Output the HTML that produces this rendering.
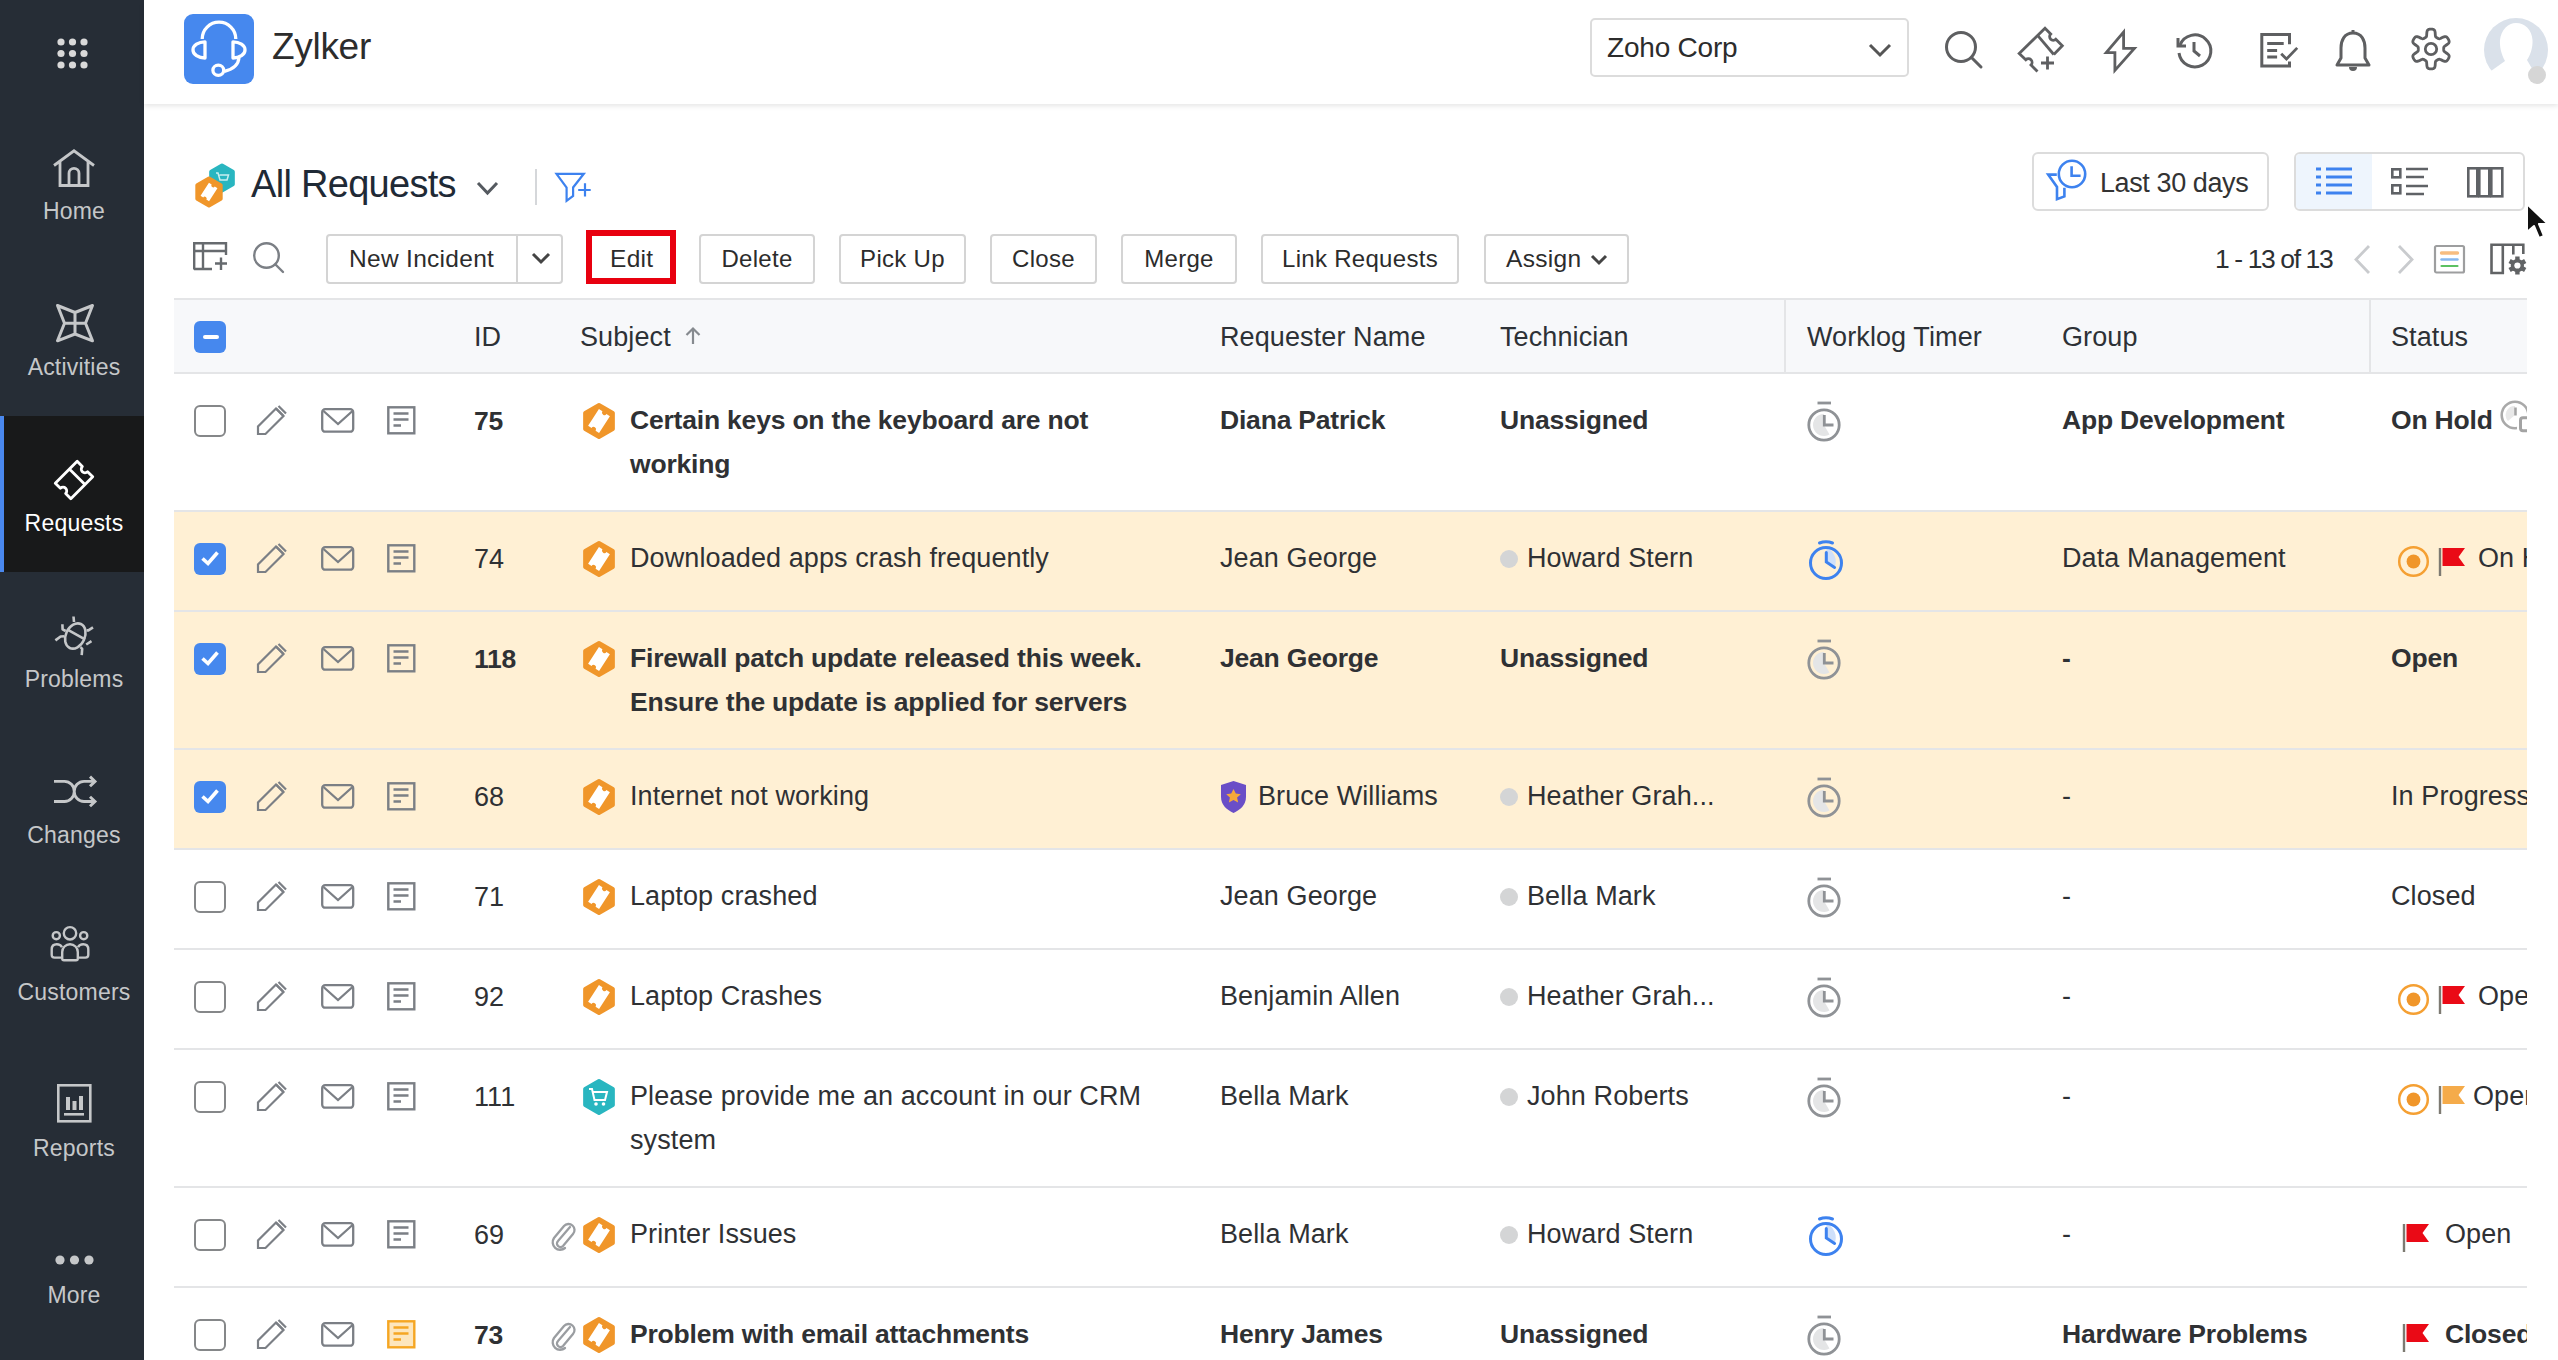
<!DOCTYPE html>
<html><head><meta charset="utf-8"><style>
html,body{margin:0;padding:0;}
body{width:2558px;height:1360px;position:relative;overflow:hidden;background:#fff;font-family:"Liberation Sans",sans-serif;}
svg{overflow:visible}
</style></head><body>
<div id="sb" style="position:absolute;left:0;top:0;width:144px;height:1360px;background:#262d36"></div>
<svg style="position:absolute;left:57px;top:38px" width="31" height="31" viewBox="0 0 31 31"><circle cx="4.0" cy="4.0" r="3.6" fill="#d9d9d9"/><circle cx="4.0" cy="15.5" r="3.6" fill="#d9d9d9"/><circle cx="4.0" cy="27.0" r="3.6" fill="#d9d9d9"/><circle cx="15.5" cy="4.0" r="3.6" fill="#d9d9d9"/><circle cx="15.5" cy="15.5" r="3.6" fill="#d9d9d9"/><circle cx="15.5" cy="27.0" r="3.6" fill="#d9d9d9"/><circle cx="27.0" cy="4.0" r="3.6" fill="#d9d9d9"/><circle cx="27.0" cy="15.5" r="3.6" fill="#d9d9d9"/><circle cx="27.0" cy="27.0" r="3.6" fill="#d9d9d9"/></svg>
<div style="position:absolute;left:0;top:416px;width:144px;height:156px;background:#18191a"></div>
<div style="position:absolute;left:0;top:416px;width:4px;height:156px;background:#4a88ee"></div>
<svg style="position:absolute;left:52px;top:149px" width="44" height="40" viewBox="0 0 44 40"><path d="M2 16.5 L22 1.8 L42 16.5 M8 12.5 V36.5 H36 V12.5 M17 36.5 V24.3 A5 5 0 0 1 27 24.3 V36.5" fill="none" stroke="#c5c7c9" stroke-width="2.8" stroke-linejoin="miter"/></svg>
<div style="position:absolute;left:2px;width:144px;top:200px;text-align:center;font-size:23px;letter-spacing:0.2px;color:#c5c7c9;line-height:1">Home</div>
<svg style="position:absolute;left:53px;top:302px" width="44" height="42" viewBox="0 0 44 42"><path d="M4.5 3.5 L22 10.5 L39.5 3.5 L32.5 21.2 L39.5 38.8 L22 32 L4.5 38.8 L11.5 21.2 Z M22 10.5 V32 M11.5 21.2 H32.5" fill="none" stroke="#c5c7c9" stroke-width="3" stroke-linejoin="round"/></svg>
<div style="position:absolute;left:2px;width:144px;top:356px;text-align:center;font-size:23px;letter-spacing:0.2px;color:#c5c7c9;line-height:1">Activities</div>
<svg style="position:absolute;left:52px;top:458px" width="44" height="44" viewBox="0 0 44 44"><g transform="rotate(-45 22 22)"><path d="M6.5 11 H37.5 V18.3 a3.7 3.7 0 0 0 0 7.4 V33 H6.5 V25.7 a3.7 3.7 0 0 0 0 -7.4 Z M26.5 11 V33" fill="none" stroke="#fff" stroke-width="2.8" stroke-linejoin="round"/></g></svg>
<div style="position:absolute;left:2px;width:144px;top:512px;text-align:center;font-size:23px;letter-spacing:0.2px;color:#ffffff;line-height:1">Requests</div>
<svg style="position:absolute;left:53px;top:614px" width="42" height="43" viewBox="0 0 42 43"><g fill="none" stroke="#c5c7c9" stroke-width="2.6" stroke-linecap="butt" stroke-linejoin="round"><ellipse cx="22.3" cy="22" rx="9.5" ry="13.2" transform="rotate(25 22.3 22)"/><path d="M14.5 15.6 L32 25.3 M20.5 2.5 L21 8 M9.4 10.2 L9.6 15.3 L12.7 17 M2.4 26.4 L7.6 22.5 L11.3 22.3 M40 13.3 L35.4 16.4 L33.6 16.4 M38.5 27.2 L33.2 30.5 M28.7 41.1 L29.2 34.9 L27.5 33.2"/></g></svg>
<div style="position:absolute;left:2px;width:144px;top:668px;text-align:center;font-size:23px;letter-spacing:0.2px;color:#c5c7c9;line-height:1">Problems</div>
<svg style="position:absolute;left:53px;top:775px" width="46" height="34" viewBox="0 0 46 34"><g fill="none" stroke="#c5c7c9" stroke-width="2.9"><path d="M1 6.4 H11.5 A9.8 10.05 0 0 1 11.5 26.5 H1 M41 6.4 H31 A9.8 10.05 0 0 0 31 26.5 H41"/><path d="M37 1.6 L42 6.4 L37 11.2 M37 21.7 L42 26.5 L37 31.3" stroke-linejoin="miter"/></g></svg>
<div style="position:absolute;left:2px;width:144px;top:824px;text-align:center;font-size:23px;letter-spacing:0.2px;color:#c5c7c9;line-height:1">Changes</div>
<svg style="position:absolute;left:50px;top:926px" width="41" height="38" viewBox="0 0 41 38"><g fill="none" stroke="#c5c7c9" stroke-width="2.4" stroke-linejoin="round"><circle cx="20" cy="7.3" r="6.2"/><circle cx="6.3" cy="9.7" r="3.6"/><circle cx="33.7" cy="9.7" r="3.6"/><path d="M12.2 26 A7.8 7.8 0 0 1 27.8 26 V32.5 Q27.8 34.3 26 34.3 H14 Q12.2 34.3 12.2 32.5 Z"/><path d="M11.2 31.6 H4.6 Q1.7 31.6 1.7 28.7 V23.5 Q1.7 18.3 6.8 18.3 Q10.5 18.3 12 21.2"/><path d="M28.8 31.6 H35.4 Q38.3 31.6 38.3 28.7 V23.5 Q38.3 18.3 33.2 18.3 Q29.5 18.3 28 21.2"/></g></svg>
<div style="position:absolute;left:2px;width:144px;top:981px;text-align:center;font-size:23px;letter-spacing:0.2px;color:#c5c7c9;line-height:1">Customers</div>
<svg style="position:absolute;left:57px;top:1084px" width="35" height="39" viewBox="0 0 35 39"><rect x="1.3" y="1.3" width="32" height="36" fill="none" stroke="#c5c7c9" stroke-width="2.6"/><rect x="9" y="13" width="4" height="13" fill="#c5c7c9"/><rect x="15.5" y="17" width="4" height="9" fill="#c5c7c9"/><rect x="22" y="12" width="4" height="14" fill="#c5c7c9"/><rect x="7" y="29" width="20" height="2.6" fill="#c5c7c9"/></svg>
<div style="position:absolute;left:2px;width:144px;top:1137px;text-align:center;font-size:23px;letter-spacing:0.2px;color:#c5c7c9;line-height:1">Reports</div>
<svg style="position:absolute;left:55px;top:1255px" width="40" height="10" viewBox="0 0 40 10"><circle cx="5" cy="5" r="4.6" fill="#c5c7c9"/><circle cx="19.5" cy="5" r="4.6" fill="#c5c7c9"/><circle cx="34" cy="5" r="4.6" fill="#c5c7c9"/></svg>
<div style="position:absolute;left:2px;width:144px;top:1284px;text-align:center;font-size:23px;letter-spacing:0.2px;color:#c5c7c9;line-height:1">More</div>
<div style="position:absolute;left:144px;top:0;width:2414px;height:104px;background:#fff;box-shadow:0 2px 5px rgba(0,0,0,0.10);z-index:2"></div>
<div style="position:absolute;left:184px;top:14px;width:70px;height:70px;border-radius:9px;background:#4688ee;z-index:3"></div>
<svg style="position:absolute;left:184px;top:14px;z-index:3" width="70" height="70" viewBox="0 0 70 70"><g fill="none" stroke="#fff" stroke-width="3.3" stroke-linejoin="round"><path d="M18.2 25 A16.8 16.8 0 0 1 51.8 25"/><path d="M21 27.8 V44 A12 8.1 0 0 1 21 27.8 Z"/><path d="M49 27.8 V44 A12 8.1 0 0 0 49 27.8 Z"/><path d="M55 43.5 C54.5 51 48 55.5 40.5 57.3"/><ellipse cx="34.3" cy="56.2" rx="5.4" ry="5.1"/></g></svg>
<div style="position:absolute;left:272px;top:28px;font-size:37px;font-weight:normal;color:#2c2c2c;letter-spacing:-0.3px;white-space:nowrap;line-height:1;z-index:3">Zylker</div>
<div style="position:absolute;left:1590px;top:18px;width:315px;height:55px;border:2px solid #dcdcdc;border-radius:5px;background:#fff;z-index:3"></div>
<div style="position:absolute;left:1607px;top:34px;font-size:28px;font-weight:normal;color:#2c2c2c;letter-spacing:-0.2px;white-space:nowrap;line-height:1;z-index:3">Zoho Corp</div>
<svg style="position:absolute;left:1868px;top:42px;z-index:3" width="24" height="16" viewBox="0 0 24 16"><path d="M2 3 L12 13 L22 3" fill="none" stroke="#555" stroke-width="3"/></svg>
<svg style="position:absolute;left:1944px;top:30px;z-index:3" width="40" height="40" viewBox="0 0 40 40"><g fill="none" stroke="#5e5f61" stroke-width="3"><circle cx="17" cy="17" r="14.5"/><path d="M27.5 27.5 L37 37" stroke-linecap="round"/></g></svg>
<svg style="position:absolute;left:2010px;top:20px;z-index:3" width="60" height="60" viewBox="0 0 60 60"><g fill="none" stroke="#5e5f61" stroke-width="2.8" stroke-linejoin="miter"><path d="M27.5 51.5 L21 45 A3.6 3.6 0 0 0 15.8 39.8 L9.2 33.5 L35 8.2 L40.7 14 A3.6 3.6 0 0 0 45.8 19.2 L52.3 25.8 L43.8 34.5"/><path d="M28 15.8 L43.8 34.5"/><path d="M31 43 H44 M37.5 36.5 V49.5"/></g></svg>
<svg style="position:absolute;left:2102px;top:28px;z-index:3" width="36" height="46" viewBox="0 0 36 46"><path d="M21.6 4 V20.4 H32.4 L12.9 42.4 V24.7 H4.2 Z" fill="none" stroke="#5e5f61" stroke-width="2.8" stroke-linejoin="miter" stroke-miterlimit="10"/></svg>
<svg style="position:absolute;left:2175px;top:31px;z-index:3" width="40" height="40" viewBox="0 0 40 40"><g fill="none" stroke="#5e5f61" stroke-width="3"><path d="M5 14 A16 16 0 1 1 4 22"/><path d="M3 7 V15 H11" stroke-linejoin="miter"/><path d="M19 11 V20 L25 25"/></g></svg>
<svg style="position:absolute;left:2258px;top:31px;z-index:3" width="42" height="40" viewBox="0 0 42 40"><g fill="none" stroke="#5e5f61" stroke-width="3"><path d="M31.5 13.2 V3.6 H3.8 V35.1 H31.5 V30.5"/><path d="M9.2 12.4 H25.7 M9.2 19.4 H19.1 M9.2 26 H19.1"/><path d="M23.2 22.7 L28.5 28 L39.2 16.9" stroke-width="2.8"/></g></svg>
<svg style="position:absolute;left:2335px;top:28px;z-index:3" width="36" height="46" viewBox="0 0 36 46"><g fill="none" stroke="#5e5f61" stroke-width="3"><path d="M18 5 C9 5 6 13 6 20 V30 L2 37 H34 L30 30 V20 C30 13 27 5 18 5 Z" stroke-linejoin="round"/><path d="M18 2 V5"/></g><path d="M14 39 H22 a4 4 0 0 1 -8 0Z" fill="#5e5f61"/></svg>
<svg style="position:absolute;left:2409px;top:27px;z-index:3" width="44" height="44" viewBox="0 0 44 44"><g fill="none" stroke="#5e5f61" stroke-width="2.8" stroke-linejoin="round"><path d="M34.70,22.00 L34.70,22.44 L34.71,22.89 L34.74,23.34 L34.85,23.81 L35.14,24.32 L35.81,24.94 L37.01,25.74 L38.47,26.72 L39.58,27.71 L40.09,28.59 L40.19,29.35 L40.07,30.05 L39.85,30.71 L39.56,31.34 L39.23,31.95 L38.87,32.54 L38.46,33.11 L38.01,33.63 L37.46,34.08 L36.75,34.38 L35.73,34.37 L34.33,33.90 L32.74,33.13 L31.45,32.49 L30.58,32.22 L29.99,32.23 L29.53,32.37 L29.12,32.56 L28.73,32.78 L28.35,33.00 L27.97,33.22 L27.59,33.45 L27.21,33.71 L26.86,34.03 L26.56,34.54 L26.36,35.43 L26.26,36.87 L26.15,38.62 L25.84,40.08 L25.34,40.96 L24.73,41.43 L24.07,41.68 L23.39,41.81 L22.69,41.88 L22.00,41.90 L21.31,41.88 L20.61,41.81 L19.93,41.68 L19.27,41.43 L18.66,40.96 L18.16,40.08 L17.85,38.62 L17.74,36.87 L17.64,35.43 L17.44,34.54 L17.14,34.03 L16.79,33.71 L16.41,33.45 L16.03,33.22 L15.65,33.00 L15.27,32.78 L14.88,32.56 L14.47,32.37 L14.01,32.23 L13.42,32.22 L12.55,32.49 L11.26,33.13 L9.67,33.90 L8.27,34.37 L7.25,34.38 L6.54,34.08 L5.99,33.63 L5.54,33.11 L5.13,32.54 L4.77,31.95 L4.44,31.34 L4.15,30.71 L3.93,30.05 L3.81,29.35 L3.91,28.59 L4.42,27.71 L5.53,26.72 L6.99,25.74 L8.19,24.94 L8.86,24.32 L9.15,23.81 L9.26,23.34 L9.29,22.89 L9.30,22.44 L9.30,22.00 L9.30,21.56 L9.29,21.11 L9.26,20.66 L9.15,20.19 L8.86,19.68 L8.19,19.06 L6.99,18.26 L5.53,17.28 L4.42,16.29 L3.91,15.41 L3.81,14.65 L3.93,13.95 L4.15,13.29 L4.44,12.66 L4.77,12.05 L5.13,11.46 L5.54,10.89 L5.99,10.37 L6.54,9.92 L7.25,9.62 L8.27,9.63 L9.67,10.10 L11.26,10.87 L12.55,11.51 L13.42,11.78 L14.01,11.77 L14.47,11.63 L14.88,11.44 L15.27,11.22 L15.65,11.00 L16.03,10.78 L16.41,10.55 L16.79,10.29 L17.14,9.97 L17.44,9.46 L17.64,8.57 L17.74,7.13 L17.85,5.38 L18.16,3.92 L18.66,3.04 L19.27,2.57 L19.93,2.32 L20.61,2.19 L21.31,2.12 L22.00,2.10 L22.69,2.12 L23.39,2.19 L24.07,2.32 L24.73,2.57 L25.34,3.04 L25.84,3.92 L26.15,5.38 L26.26,7.13 L26.36,8.57 L26.56,9.46 L26.86,9.97 L27.21,10.29 L27.59,10.55 L27.97,10.78 L28.35,11.00 L28.73,11.22 L29.12,11.44 L29.53,11.63 L29.99,11.77 L30.58,11.78 L31.45,11.51 L32.74,10.87 L34.33,10.10 L35.73,9.63 L36.75,9.62 L37.46,9.92 L38.01,10.37 L38.46,10.89 L38.87,11.46 L39.23,12.05 L39.56,12.66 L39.85,13.29 L40.07,13.95 L40.19,14.65 L40.09,15.41 L39.58,16.29 L38.47,17.28 L37.01,18.26 L35.81,19.06 L35.14,19.68 L34.85,20.19 L34.74,20.66 L34.71,21.11 L34.70,21.56 Z"/><circle cx="22" cy="22" r="5.7"/></g></svg>
<svg style="position:absolute;left:2482px;top:16px;z-index:3" width="76" height="72" viewBox="0 0 76 72"><circle cx="34" cy="34" r="32" fill="#dae1ea"/><path d="M5 72 L9 55 L23 45 C19 38 17.5 30 18 24 C19 14 26 7 34 7 C43 7 50 14 50.5 24 C51 32 48 40 45 44 L52 56 L58 72 Z" fill="#fff"/><circle cx="55" cy="59" r="9" fill="#d6d6d6"/></svg>
<svg style="position:absolute;left:193px;top:163px" width="46" height="46" viewBox="0 0 46 46"><polygon points="29.00,2.50 39.83,8.75 39.83,21.25 29.00,27.50 18.17,21.25 18.17,8.75" fill="#29b6c0" stroke="#29b6c0" stroke-width="4" stroke-linejoin="round"/><path d="M23 10 h2 l2 7 h7 l1.5 -5 h-9" fill="none" stroke="#c7eef0" stroke-width="1.5"/><polygon points="16.00,15.50 27.69,22.25 27.69,35.75 16.00,42.50 4.31,35.75 4.31,22.25" fill="#f0962a" stroke="#f0962a" stroke-width="4" stroke-linejoin="round"/><g transform="translate(16 29) rotate(-57) scale(1.1)"><path d="M-7 -4.6 H7 V-1.7 a1.7 1.7 0 0 0 0 3.4 V4.6 H-7 V1.7 a1.7 1.7 0 0 0 0 -3.4 Z" fill="#fff"/></g></svg>
<div style="position:absolute;left:251px;top:165px;font-size:38px;font-weight:normal;color:#1f2a36;letter-spacing:-0.7px;white-space:nowrap;line-height:1;">All Requests</div>
<svg style="position:absolute;left:476px;top:180px" width="23" height="16" viewBox="0 0 23 16"><path d="M2 3 L11.5 13 L21 3" fill="none" stroke="#555a60" stroke-width="3"/></svg>
<div style="position:absolute;left:535px;top:169px;width:2px;height:36px;background:#d5d7da"></div>
<svg style="position:absolute;left:554px;top:171px" width="40" height="33" viewBox="0 0 40 33"><g fill="none" stroke="#3d82ef" stroke-width="2.2" stroke-linejoin="miter"><path d="M2.5 2.8 H29.8 L19.1 16.5 V25 L12.6 29.8 V16.5 Z"/><path d="M24.2 19 H36.7 M31 12.3 V25.6"/></g></svg>
<div style="position:absolute;left:2032px;top:152px;width:233px;height:55px;border:2px solid #dcdcdc;border-radius:6px;background:#fff"></div>
<svg style="position:absolute;left:2046px;top:157px" width="44" height="45" viewBox="0 0 44 45"><g fill="none" stroke="#3d82ef" stroke-width="2.6"><circle cx="26" cy="17" r="13.2"/><path d="M25.6 9.2 V18.8 H34.6"/><path d="M10.8 17.6 H2.2 L11 30 V42.2 L18.4 39.4 V30.7" stroke-linejoin="miter"/></g></svg>
<div style="position:absolute;left:2100px;top:169.5px;font-size:27px;font-weight:normal;color:#333;letter-spacing:-0.4px;white-space:nowrap;line-height:1;">Last 30 days</div>
<div style="position:absolute;left:2294px;top:152px;width:227px;height:55px;border:2px solid #dcdcdc;border-radius:6px;background:#fff;overflow:hidden"><div style="position:absolute;left:0;top:0;width:76px;height:55px;background:#eef5fd"></div></div>
<svg style="position:absolute;left:2315px;top:167px" width="38" height="32" viewBox="0 0 38 32"><g stroke="#3d82ef" stroke-width="3"><path d="M1 2 H6 M1 10 H6 M1 18 H6 M1 26 H6 M11 2 H37 M11 10 H37 M11 18 H37 M11 26 H37"/></g></svg>
<svg style="position:absolute;left:2391px;top:167px" width="38" height="32" viewBox="0 0 38 32"><g fill="none" stroke="#5f6266" stroke-width="2.6"><rect x="1.3" y="2.3" width="8" height="8"/><rect x="1.3" y="18.3" width="8" height="8"/><path d="M15 2 H37 M15 10 H33 M15 19 H37 M15 27 H33"/></g></svg>
<svg style="position:absolute;left:2467px;top:167px" width="38" height="32" viewBox="0 0 38 32"><g fill="none" stroke="#5f6266" stroke-width="2.6"><rect x="1.3" y="1.3" width="9" height="28"/><rect x="12.3" y="1.3" width="10" height="28"/><rect x="24.3" y="1.3" width="11" height="28"/></g></svg>
<svg style="position:absolute;left:193px;top:242px" width="36" height="29" viewBox="0 0 36 29"><g fill="none" stroke="#666a6e" stroke-width="2.4"><path d="M1.2 27.5 V1.2 H33 V13"/><path d="M1 9 H33 M10 1 V27.5 M1 27 H19"/><path d="M22 21.5 H34 M28 15.5 V28"/></g></svg>
<svg style="position:absolute;left:252px;top:241px" width="34" height="33" viewBox="0 0 34 33"><g fill="none" stroke="#7b7f85" stroke-width="2.4"><circle cx="14.5" cy="14.5" r="12.3"/><path d="M23.5 23.5 L31 31" stroke-linecap="round"/></g></svg>
<div style="position:absolute;left:326px;top:234px;width:233px;height:46px;border:2px solid #d4d4d4;border-radius:4px;background:#fff"></div>
<div style="position:absolute;left:516px;top:236px;width:2px;height:46px;background:#d4d4d4"></div>
<div style="position:absolute;left:349px;top:247px;font-size:24.5px;font-weight:normal;color:#2c2c2c;letter-spacing:0.3px;white-space:nowrap;line-height:1;">New Incident</div>
<svg style="position:absolute;left:531px;top:251px" width="20" height="14" viewBox="0 0 20 14"><path d="M2 3 L10 11 L18 3" fill="none" stroke="#444" stroke-width="3"/></svg>
<div style="position:absolute;left:586px;top:230px;width:78px;height:42px;border:6px solid #e8000f;background:#fff"></div>
<div style="position:absolute;left:610px;top:247px;font-size:24.5px;font-weight:normal;color:#2c2c2c;letter-spacing:0.3px;white-space:nowrap;line-height:1;">Edit</div>
<div style="position:absolute;left:699px;top:234px;width:112px;height:46px;border:2px solid #d4d4d4;border-radius:4px;background:#fff"></div><div style="position:absolute;left:699px;top:247px;width:116px;text-align:center;font-size:24px;letter-spacing:0.3px;color:#2c2c2c;line-height:1">Delete</div>
<div style="position:absolute;left:839px;top:234px;width:123px;height:46px;border:2px solid #d4d4d4;border-radius:4px;background:#fff"></div><div style="position:absolute;left:839px;top:247px;width:127px;text-align:center;font-size:24px;letter-spacing:0.3px;color:#2c2c2c;line-height:1">Pick Up</div>
<div style="position:absolute;left:990px;top:234px;width:103px;height:46px;border:2px solid #d4d4d4;border-radius:4px;background:#fff"></div><div style="position:absolute;left:990px;top:247px;width:107px;text-align:center;font-size:24px;letter-spacing:0.3px;color:#2c2c2c;line-height:1">Close</div>
<div style="position:absolute;left:1121px;top:234px;width:112px;height:46px;border:2px solid #d4d4d4;border-radius:4px;background:#fff"></div><div style="position:absolute;left:1121px;top:247px;width:116px;text-align:center;font-size:24px;letter-spacing:0.3px;color:#2c2c2c;line-height:1">Merge</div>
<div style="position:absolute;left:1261px;top:234px;width:194px;height:46px;border:2px solid #d4d4d4;border-radius:4px;background:#fff"></div><div style="position:absolute;left:1261px;top:247px;width:198px;text-align:center;font-size:24px;letter-spacing:0.3px;color:#2c2c2c;line-height:1">Link Requests</div>
<div style="position:absolute;left:1484px;top:234px;width:141px;height:46px;border:2px solid #d4d4d4;border-radius:4px;background:#fff"></div>
<div style="position:absolute;left:1506px;top:247px;font-size:24.5px;font-weight:normal;color:#2c2c2c;letter-spacing:0.3px;white-space:nowrap;line-height:1;">Assign</div>
<svg style="position:absolute;left:1590px;top:253.5px" width="18" height="12" viewBox="0 0 18 12"><path d="M2 2 L9 9 L16 2" fill="none" stroke="#444" stroke-width="3"/></svg>
<div style="position:absolute;left:2215px;top:246px;font-size:26.5px;font-weight:normal;color:#2c2f33;letter-spacing:-1.4px;white-space:nowrap;line-height:1;">1 - 13 of 13</div>
<svg style="position:absolute;left:2352px;top:244px" width="20" height="32" viewBox="0 0 20 32"><path d="M17 2 L4 15.5 L17 29" fill="none" stroke="#c9cbce" stroke-width="2.8"/></svg>
<svg style="position:absolute;left:2396px;top:244px" width="20" height="32" viewBox="0 0 20 32"><path d="M3 2 L16 15.5 L3 29" fill="none" stroke="#c9cbce" stroke-width="2.8"/></svg>
<svg style="position:absolute;left:2433px;top:244px" width="33" height="30" viewBox="0 0 33 30"><rect x="2" y="2" width="29" height="26.5" rx="1.5" fill="none" stroke="#9d9e9f" stroke-width="2.2"/><path d="M8.5 9 H24.5" stroke="#f7bd80" stroke-width="3.4" stroke-linecap="round"/><path d="M8.5 15.5 H24.5" stroke="#86b8ef" stroke-width="2.4" stroke-linecap="round"/><path d="M8.5 22 H24.5" stroke="#5cc162" stroke-width="2.2" stroke-linecap="round"/></svg>
<svg style="position:absolute;left:2489px;top:243px" width="40" height="33" viewBox="0 0 40 33"><g fill="none" stroke="#616365" stroke-width="2.6"><path d="M2.5 30 V1.8 H13.8 V30 Z M13.8 1.8 H34.3 V11 M24.3 1.8 V11.5"/></g><g transform="translate(28.4 22.5)"><rect x="-2.2" y="-9" width="4.4" height="5" transform="rotate(0)" fill="#616365"/><rect x="-2.2" y="-9" width="4.4" height="5" transform="rotate(60)" fill="#616365"/><rect x="-2.2" y="-9" width="4.4" height="5" transform="rotate(120)" fill="#616365"/><rect x="-2.2" y="-9" width="4.4" height="5" transform="rotate(180)" fill="#616365"/><rect x="-2.2" y="-9" width="4.4" height="5" transform="rotate(240)" fill="#616365"/><rect x="-2.2" y="-9" width="4.4" height="5" transform="rotate(300)" fill="#616365"/><circle r="6.6" fill="#616365"/><circle r="3.1" fill="#fff"/></g></svg>
<svg style="position:absolute;left:2524px;top:200.5px;z-index:10" width="28" height="42" viewBox="0 0 28 42"><path d="M3 3 V31 L10 25 L15 37 L20 35 L15 23 L24 23 Z" fill="#111" stroke="#fff" stroke-width="2" stroke-linejoin="round"/></svg>
<div style="position:absolute;left:174px;top:298px;width:2353px;height:76px;background:#f7f8fa;border-top:2px solid #e4e5e7;border-bottom:2px solid #e4e5e7;box-sizing:border-box"></div>
<div style="position:absolute;left:1784px;top:300px;width:2px;height:72px;background:#e4e5e7"></div>
<div style="position:absolute;left:2369px;top:300px;width:2px;height:72px;background:#e4e5e7"></div>
<div style="position:absolute;left:194px;top:321px;width:32px;height:32px;border-radius:6px;background:#4688ee"></div>
<div style="position:absolute;left:203px;top:335px;width:16px;height:4px;border-radius:2px;background:#fff"></div>
<div style="position:absolute;left:474px;top:324px;font-size:27px;font-weight:normal;color:#2d3136;letter-spacing:0.1px;white-space:nowrap;line-height:1;">ID</div>
<div style="position:absolute;left:580px;top:324px;font-size:27px;font-weight:normal;color:#2d3136;letter-spacing:0.1px;white-space:nowrap;line-height:1;">Subject</div>
<div style="position:absolute;left:1220px;top:324px;font-size:27px;font-weight:normal;color:#2d3136;letter-spacing:0.1px;white-space:nowrap;line-height:1;">Requester Name</div>
<div style="position:absolute;left:1500px;top:324px;font-size:27px;font-weight:normal;color:#2d3136;letter-spacing:0.1px;white-space:nowrap;line-height:1;">Technician</div>
<div style="position:absolute;left:1807px;top:324px;font-size:27px;font-weight:normal;color:#2d3136;letter-spacing:0.1px;white-space:nowrap;line-height:1;">Worklog Timer</div>
<div style="position:absolute;left:2062px;top:324px;font-size:27px;font-weight:normal;color:#2d3136;letter-spacing:0.1px;white-space:nowrap;line-height:1;">Group</div>
<div style="position:absolute;left:2391px;top:324px;font-size:27px;font-weight:normal;color:#2d3136;letter-spacing:0.1px;white-space:nowrap;line-height:1;">Status</div>
<svg style="position:absolute;left:683px;top:325px" width="20" height="22" viewBox="0 0 20 22"><path d="M10 19 V4 M3.5 10 L10 3.5 L16.5 10" fill="none" stroke="#868a8f" stroke-width="2.2"/></svg>
<div style="position:absolute;left:174px;top:374px;width:2353px;height:136px;background:#fff"></div>
<div style="position:absolute;left:174px;top:510px;width:2353px;height:2px;background:#e4e5e7"></div>
<div style="position:absolute;left:194px;top:405px;width:28px;height:28px;border-radius:6px;border:2px solid #858789;background:#fff"></div>
<svg style="position:absolute;left:256px;top:404px" width="32" height="32" viewBox="0 0 32 32"><g fill="none" stroke="#7b7f85" stroke-width="2.2" stroke-linejoin="miter"><path d="M2 29.5 V22.5 L20 4.5 L27.5 12 L9.5 30 H2 Z"/><path d="M22.5 2 L30 9.5 M20 4.5 L27.5 12"/></g></svg>
<svg style="position:absolute;left:321px;top:408px" width="34" height="26" viewBox="0 0 34 26"><g fill="none" stroke="#7b7f85" stroke-width="2.3"><rect x="1.2" y="1.2" width="31" height="22.5" rx="3"/><path d="M2.5 3 L17 16 L31.5 3"/></g></svg>
<svg style="position:absolute;left:387px;top:406px" width="30" height="30" viewBox="0 0 30 30"><rect x="1.3" y="1.3" width="26" height="26" fill="none" stroke="#7b7f85" stroke-width="2.4"/><path d="M6.5 7.5 H21.5 M6.5 13.5 H21.5 M6.5 19.5 H14" stroke="#7b7f85" stroke-width="2.3"/></svg>
<div style="position:absolute;left:474px;top:408px;font-size:26.5px;font-weight:bold;color:#2f3134;letter-spacing:-0.2px;white-space:nowrap;line-height:1;">75</div>
<svg style="position:absolute;left:581px;top:402px" width="36" height="38" viewBox="0 0 36 38"><polygon points="18.00,3.00 31.86,11.00 31.86,27.00 18.00,35.00 4.14,27.00 4.14,11.00" fill="#f0962a" stroke="#f0962a" stroke-width="4" stroke-linejoin="round"/><g transform="translate(18 19) rotate(-57) scale(1.42)"><path d="M-7 -4.6 H7 V-1.7 a1.7 1.7 0 0 0 0 3.4 V4.6 H-7 V1.7 a1.7 1.7 0 0 0 0 -3.4 Z" fill="#fff"/></g></svg>
<div style="position:absolute;left:630px;top:407px;font-size:26.5px;font-weight:bold;color:#2f3134;letter-spacing:-0.2px;white-space:nowrap;line-height:1;">Certain keys on the keyboard are not</div>
<div style="position:absolute;left:630px;top:451px;font-size:26.5px;font-weight:bold;color:#2f3134;letter-spacing:-0.2px;white-space:nowrap;line-height:1;">working</div>
<div style="position:absolute;left:1220px;top:407px;font-size:26.5px;font-weight:bold;color:#2f3134;letter-spacing:-0.2px;white-space:nowrap;line-height:1;">Diana Patrick</div>
<div style="position:absolute;left:1500px;top:407px;font-size:26.5px;font-weight:bold;color:#2f3134;letter-spacing:-0.2px;white-space:nowrap;line-height:1;">Unassigned</div>
<svg style="position:absolute;left:1805px;top:399px" width="42" height="44" viewBox="0 0 42 44"><path d="M19 26 V15 A11 11 0 1 0 24.5 35.5 Z" fill="#e4e5e6"/><g fill="none" stroke="#8f9296" stroke-width="2.8"><circle cx="19" cy="26" r="15.2"/><path d="M12.5 4 H26"/><path d="M19.3 16 V26 H28.5"/></g></svg>
<div style="position:absolute;left:2062px;top:407px;font-size:26.5px;font-weight:bold;color:#2f3134;letter-spacing:-0.2px;white-space:nowrap;line-height:1;">App Development</div>
<svg style="position:absolute;left:2496px;top:395px" width="40" height="44" viewBox="0 0 40 44"><circle cx="19" cy="20" r="13.3" fill="none" stroke="#a9a9a9" stroke-width="2.6"/><path d="M19 20 V11 A9 9 0 0 0 12 26 Z" fill="#e8e8e8"/><path d="M19.5 12.5 V20.5" stroke="#a3a3a3" stroke-width="2.5"/><rect x="21" y="19" width="14" height="20" fill="#fff"/><rect x="24.5" y="22.8" width="9" height="13" rx="2.5" fill="none" stroke="#a3a3a3" stroke-width="3"/></svg>
<div style="position:absolute;left:2391px;top:407px;font-size:26.5px;font-weight:bold;color:#2f3134;letter-spacing:-0.2px;white-space:nowrap;line-height:1;">On Hold</div>
<div style="position:absolute;left:174px;top:512px;width:2353px;height:98px;background:#fff0d4"></div>
<div style="position:absolute;left:174px;top:610px;width:2353px;height:2px;background:#e4e5e7"></div>
<div style="position:absolute;left:194px;top:543px;width:32px;height:32px;border-radius:6px;background:#4688ee"></div><svg style="position:absolute;left:194px;top:543px" width="32" height="32" viewBox="0 0 32 32"><path d="M8.5 15.5 L14 20.5 L23.5 9.5" fill="none" stroke="#fff" stroke-width="3.6"/></svg>
<svg style="position:absolute;left:256px;top:542px" width="32" height="32" viewBox="0 0 32 32"><g fill="none" stroke="#7b7f85" stroke-width="2.2" stroke-linejoin="miter"><path d="M2 29.5 V22.5 L20 4.5 L27.5 12 L9.5 30 H2 Z"/><path d="M22.5 2 L30 9.5 M20 4.5 L27.5 12"/></g></svg>
<svg style="position:absolute;left:321px;top:546px" width="34" height="26" viewBox="0 0 34 26"><g fill="none" stroke="#7b7f85" stroke-width="2.3"><rect x="1.2" y="1.2" width="31" height="22.5" rx="3"/><path d="M2.5 3 L17 16 L31.5 3"/></g></svg>
<svg style="position:absolute;left:387px;top:544px" width="30" height="30" viewBox="0 0 30 30"><rect x="1.3" y="1.3" width="26" height="26" fill="none" stroke="#7b7f85" stroke-width="2.4"/><path d="M6.5 7.5 H21.5 M6.5 13.5 H21.5 M6.5 19.5 H14" stroke="#7b7f85" stroke-width="2.3"/></svg>
<div style="position:absolute;left:474px;top:546px;font-size:27px;font-weight:normal;color:#2f3134;letter-spacing:0.1px;white-space:nowrap;line-height:1;">74</div>
<svg style="position:absolute;left:581px;top:540px" width="36" height="38" viewBox="0 0 36 38"><polygon points="18.00,3.00 31.86,11.00 31.86,27.00 18.00,35.00 4.14,27.00 4.14,11.00" fill="#f0962a" stroke="#f0962a" stroke-width="4" stroke-linejoin="round"/><g transform="translate(18 19) rotate(-57) scale(1.42)"><path d="M-7 -4.6 H7 V-1.7 a1.7 1.7 0 0 0 0 3.4 V4.6 H-7 V1.7 a1.7 1.7 0 0 0 0 -3.4 Z" fill="#fff"/></g></svg>
<div style="position:absolute;left:630px;top:545px;font-size:27px;font-weight:normal;color:#2f3134;letter-spacing:0.1px;white-space:nowrap;line-height:1;">Downloaded apps crash frequently</div>
<div style="position:absolute;left:1220px;top:545px;font-size:27px;font-weight:normal;color:#2f3134;letter-spacing:0.1px;white-space:nowrap;line-height:1;">Jean George</div>
<div style="position:absolute;left:1500px;top:550px;width:18px;height:18px;border-radius:50%;background:#d4d5d6"></div>
<div style="position:absolute;left:1527px;top:545px;font-size:27px;font-weight:normal;color:#2f3134;letter-spacing:0.1px;white-space:nowrap;line-height:1;">Howard Stern</div>
<svg style="position:absolute;left:1805px;top:537px" width="42" height="44" viewBox="0 0 42 44"><path d="M21.3 15.5 V25 L29.6 30.5 A15.5 15.5 0 0 0 21.3 10.5 Z" fill="#cfe0fa"/><g fill="none" stroke="#3d82ef" stroke-width="3" stroke-linecap="round"><circle cx="21" cy="26" r="15.5"/><path d="M14.5 6 Q21 3.5 27.5 6"/><path d="M21.3 15.5 V25 L29.6 30.5"/></g></svg>
<div style="position:absolute;left:2062px;top:545px;font-size:27px;font-weight:normal;color:#2f3134;letter-spacing:0.1px;white-space:nowrap;line-height:1;">Data Management</div>
<svg style="position:absolute;left:2397px;top:545px" width="33" height="33" viewBox="0 0 33 33"><circle cx="16.5" cy="16.5" r="14.3" fill="none" stroke="#f5a033" stroke-width="2.5"/><circle cx="16.5" cy="16.5" r="6.9" fill="#f0962a"/></svg>
<svg style="position:absolute;left:2438px;top:547px" width="28" height="30" viewBox="0 0 28 30"><path d="M2 1 V29" stroke="#7d7a72" stroke-width="2.4"/><path d="M4.5 1 H27 L20.5 10 L27 19 H4.5 Z" fill="#ea0a16"/></svg>
<div style="position:absolute;left:2478px;top:545px;font-size:27px;font-weight:normal;color:#2f3134;letter-spacing:0.1px;white-space:nowrap;line-height:1;">On H</div>
<div style="position:absolute;left:174px;top:612px;width:2353px;height:136px;background:#fff0d4"></div>
<div style="position:absolute;left:174px;top:748px;width:2353px;height:2px;background:#e4e5e7"></div>
<div style="position:absolute;left:194px;top:643px;width:32px;height:32px;border-radius:6px;background:#4688ee"></div><svg style="position:absolute;left:194px;top:643px" width="32" height="32" viewBox="0 0 32 32"><path d="M8.5 15.5 L14 20.5 L23.5 9.5" fill="none" stroke="#fff" stroke-width="3.6"/></svg>
<svg style="position:absolute;left:256px;top:642px" width="32" height="32" viewBox="0 0 32 32"><g fill="none" stroke="#7b7f85" stroke-width="2.2" stroke-linejoin="miter"><path d="M2 29.5 V22.5 L20 4.5 L27.5 12 L9.5 30 H2 Z"/><path d="M22.5 2 L30 9.5 M20 4.5 L27.5 12"/></g></svg>
<svg style="position:absolute;left:321px;top:646px" width="34" height="26" viewBox="0 0 34 26"><g fill="none" stroke="#7b7f85" stroke-width="2.3"><rect x="1.2" y="1.2" width="31" height="22.5" rx="3"/><path d="M2.5 3 L17 16 L31.5 3"/></g></svg>
<svg style="position:absolute;left:387px;top:644px" width="30" height="30" viewBox="0 0 30 30"><rect x="1.3" y="1.3" width="26" height="26" fill="none" stroke="#7b7f85" stroke-width="2.4"/><path d="M6.5 7.5 H21.5 M6.5 13.5 H21.5 M6.5 19.5 H14" stroke="#7b7f85" stroke-width="2.3"/></svg>
<div style="position:absolute;left:474px;top:646px;font-size:26.5px;font-weight:bold;color:#2f3134;letter-spacing:-0.2px;white-space:nowrap;line-height:1;">118</div>
<svg style="position:absolute;left:581px;top:640px" width="36" height="38" viewBox="0 0 36 38"><polygon points="18.00,3.00 31.86,11.00 31.86,27.00 18.00,35.00 4.14,27.00 4.14,11.00" fill="#f0962a" stroke="#f0962a" stroke-width="4" stroke-linejoin="round"/><g transform="translate(18 19) rotate(-57) scale(1.42)"><path d="M-7 -4.6 H7 V-1.7 a1.7 1.7 0 0 0 0 3.4 V4.6 H-7 V1.7 a1.7 1.7 0 0 0 0 -3.4 Z" fill="#fff"/></g></svg>
<div style="position:absolute;left:630px;top:645px;font-size:26.5px;font-weight:bold;color:#2f3134;letter-spacing:-0.2px;white-space:nowrap;line-height:1;">Firewall patch update released this week.</div>
<div style="position:absolute;left:630px;top:689px;font-size:26.5px;font-weight:bold;color:#2f3134;letter-spacing:-0.2px;white-space:nowrap;line-height:1;">Ensure the update is applied for servers</div>
<div style="position:absolute;left:1220px;top:645px;font-size:26.5px;font-weight:bold;color:#2f3134;letter-spacing:-0.2px;white-space:nowrap;line-height:1;">Jean George</div>
<div style="position:absolute;left:1500px;top:645px;font-size:26.5px;font-weight:bold;color:#2f3134;letter-spacing:-0.2px;white-space:nowrap;line-height:1;">Unassigned</div>
<svg style="position:absolute;left:1805px;top:637px" width="42" height="44" viewBox="0 0 42 44"><path d="M19 26 V15 A11 11 0 1 0 24.5 35.5 Z" fill="#e4e5e6"/><g fill="none" stroke="#8f9296" stroke-width="2.8"><circle cx="19" cy="26" r="15.2"/><path d="M12.5 4 H26"/><path d="M19.3 16 V26 H28.5"/></g></svg>
<div style="position:absolute;left:2062px;top:645px;font-size:26.5px;font-weight:bold;color:#2f3134;letter-spacing:-0.2px;white-space:nowrap;line-height:1;">-</div>
<div style="position:absolute;left:2391px;top:645px;font-size:26.5px;font-weight:bold;color:#2f3134;letter-spacing:-0.2px;white-space:nowrap;line-height:1;">Open</div>
<div style="position:absolute;left:174px;top:750px;width:2353px;height:98px;background:#fff0d4"></div>
<div style="position:absolute;left:174px;top:848px;width:2353px;height:2px;background:#e4e5e7"></div>
<div style="position:absolute;left:194px;top:781px;width:32px;height:32px;border-radius:6px;background:#4688ee"></div><svg style="position:absolute;left:194px;top:781px" width="32" height="32" viewBox="0 0 32 32"><path d="M8.5 15.5 L14 20.5 L23.5 9.5" fill="none" stroke="#fff" stroke-width="3.6"/></svg>
<svg style="position:absolute;left:256px;top:780px" width="32" height="32" viewBox="0 0 32 32"><g fill="none" stroke="#7b7f85" stroke-width="2.2" stroke-linejoin="miter"><path d="M2 29.5 V22.5 L20 4.5 L27.5 12 L9.5 30 H2 Z"/><path d="M22.5 2 L30 9.5 M20 4.5 L27.5 12"/></g></svg>
<svg style="position:absolute;left:321px;top:784px" width="34" height="26" viewBox="0 0 34 26"><g fill="none" stroke="#7b7f85" stroke-width="2.3"><rect x="1.2" y="1.2" width="31" height="22.5" rx="3"/><path d="M2.5 3 L17 16 L31.5 3"/></g></svg>
<svg style="position:absolute;left:387px;top:782px" width="30" height="30" viewBox="0 0 30 30"><rect x="1.3" y="1.3" width="26" height="26" fill="none" stroke="#7b7f85" stroke-width="2.4"/><path d="M6.5 7.5 H21.5 M6.5 13.5 H21.5 M6.5 19.5 H14" stroke="#7b7f85" stroke-width="2.3"/></svg>
<div style="position:absolute;left:474px;top:784px;font-size:27px;font-weight:normal;color:#2f3134;letter-spacing:0.1px;white-space:nowrap;line-height:1;">68</div>
<svg style="position:absolute;left:581px;top:778px" width="36" height="38" viewBox="0 0 36 38"><polygon points="18.00,3.00 31.86,11.00 31.86,27.00 18.00,35.00 4.14,27.00 4.14,11.00" fill="#f0962a" stroke="#f0962a" stroke-width="4" stroke-linejoin="round"/><g transform="translate(18 19) rotate(-57) scale(1.42)"><path d="M-7 -4.6 H7 V-1.7 a1.7 1.7 0 0 0 0 3.4 V4.6 H-7 V1.7 a1.7 1.7 0 0 0 0 -3.4 Z" fill="#fff"/></g></svg>
<div style="position:absolute;left:630px;top:783px;font-size:27px;font-weight:normal;color:#2f3134;letter-spacing:0.1px;white-space:nowrap;line-height:1;">Internet not working</div>
<svg style="position:absolute;left:1220px;top:780px" width="27" height="34" viewBox="0 0 27 34"><path d="M13.5 1 L26 5 V17 C26 25 20 30 13.5 33 C7 30 1 25 1 17 V5 Z" fill="#6a4ec7"/><path d="M13.5 9 L15.8 13.6 L20.8 14.2 L17.1 17.6 L18.1 22.6 L13.5 20.1 L8.9 22.6 L9.9 17.6 L6.2 14.2 L11.2 13.6 Z" fill="#f6a93b"/></svg>
<div style="position:absolute;left:1258px;top:783px;font-size:27px;font-weight:normal;color:#2f3134;letter-spacing:0.1px;white-space:nowrap;line-height:1;">Bruce Williams</div>
<div style="position:absolute;left:1500px;top:788px;width:18px;height:18px;border-radius:50%;background:#d4d5d6"></div>
<div style="position:absolute;left:1527px;top:783px;font-size:27px;font-weight:normal;color:#2f3134;letter-spacing:0.1px;white-space:nowrap;line-height:1;">Heather Grah...</div>
<svg style="position:absolute;left:1805px;top:775px" width="42" height="44" viewBox="0 0 42 44"><path d="M19 26 V15 A11 11 0 1 0 24.5 35.5 Z" fill="#e4e5e6"/><g fill="none" stroke="#8f9296" stroke-width="2.8"><circle cx="19" cy="26" r="15.2"/><path d="M12.5 4 H26"/><path d="M19.3 16 V26 H28.5"/></g></svg>
<div style="position:absolute;left:2062px;top:783px;font-size:27px;font-weight:normal;color:#2f3134;letter-spacing:0.1px;white-space:nowrap;line-height:1;">-</div>
<div style="position:absolute;left:2391px;top:783px;font-size:27px;font-weight:normal;color:#2f3134;letter-spacing:0.1px;white-space:nowrap;line-height:1;">In Progress</div>
<div style="position:absolute;left:174px;top:850px;width:2353px;height:98px;background:#fff"></div>
<div style="position:absolute;left:174px;top:948px;width:2353px;height:2px;background:#e4e5e7"></div>
<div style="position:absolute;left:194px;top:881px;width:28px;height:28px;border-radius:6px;border:2px solid #858789;background:#fff"></div>
<svg style="position:absolute;left:256px;top:880px" width="32" height="32" viewBox="0 0 32 32"><g fill="none" stroke="#7b7f85" stroke-width="2.2" stroke-linejoin="miter"><path d="M2 29.5 V22.5 L20 4.5 L27.5 12 L9.5 30 H2 Z"/><path d="M22.5 2 L30 9.5 M20 4.5 L27.5 12"/></g></svg>
<svg style="position:absolute;left:321px;top:884px" width="34" height="26" viewBox="0 0 34 26"><g fill="none" stroke="#7b7f85" stroke-width="2.3"><rect x="1.2" y="1.2" width="31" height="22.5" rx="3"/><path d="M2.5 3 L17 16 L31.5 3"/></g></svg>
<svg style="position:absolute;left:387px;top:882px" width="30" height="30" viewBox="0 0 30 30"><rect x="1.3" y="1.3" width="26" height="26" fill="none" stroke="#7b7f85" stroke-width="2.4"/><path d="M6.5 7.5 H21.5 M6.5 13.5 H21.5 M6.5 19.5 H14" stroke="#7b7f85" stroke-width="2.3"/></svg>
<div style="position:absolute;left:474px;top:884px;font-size:27px;font-weight:normal;color:#2f3134;letter-spacing:0.1px;white-space:nowrap;line-height:1;">71</div>
<svg style="position:absolute;left:581px;top:878px" width="36" height="38" viewBox="0 0 36 38"><polygon points="18.00,3.00 31.86,11.00 31.86,27.00 18.00,35.00 4.14,27.00 4.14,11.00" fill="#f0962a" stroke="#f0962a" stroke-width="4" stroke-linejoin="round"/><g transform="translate(18 19) rotate(-57) scale(1.42)"><path d="M-7 -4.6 H7 V-1.7 a1.7 1.7 0 0 0 0 3.4 V4.6 H-7 V1.7 a1.7 1.7 0 0 0 0 -3.4 Z" fill="#fff"/></g></svg>
<div style="position:absolute;left:630px;top:883px;font-size:27px;font-weight:normal;color:#2f3134;letter-spacing:0.1px;white-space:nowrap;line-height:1;">Laptop crashed</div>
<div style="position:absolute;left:1220px;top:883px;font-size:27px;font-weight:normal;color:#2f3134;letter-spacing:0.1px;white-space:nowrap;line-height:1;">Jean George</div>
<div style="position:absolute;left:1500px;top:888px;width:18px;height:18px;border-radius:50%;background:#d4d5d6"></div>
<div style="position:absolute;left:1527px;top:883px;font-size:27px;font-weight:normal;color:#2f3134;letter-spacing:0.1px;white-space:nowrap;line-height:1;">Bella Mark</div>
<svg style="position:absolute;left:1805px;top:875px" width="42" height="44" viewBox="0 0 42 44"><path d="M19 26 V15 A11 11 0 1 0 24.5 35.5 Z" fill="#e4e5e6"/><g fill="none" stroke="#8f9296" stroke-width="2.8"><circle cx="19" cy="26" r="15.2"/><path d="M12.5 4 H26"/><path d="M19.3 16 V26 H28.5"/></g></svg>
<div style="position:absolute;left:2062px;top:883px;font-size:27px;font-weight:normal;color:#2f3134;letter-spacing:0.1px;white-space:nowrap;line-height:1;">-</div>
<div style="position:absolute;left:2391px;top:883px;font-size:27px;font-weight:normal;color:#2f3134;letter-spacing:0.1px;white-space:nowrap;line-height:1;">Closed</div>
<div style="position:absolute;left:174px;top:950px;width:2353px;height:98px;background:#fff"></div>
<div style="position:absolute;left:174px;top:1048px;width:2353px;height:2px;background:#e4e5e7"></div>
<div style="position:absolute;left:194px;top:981px;width:28px;height:28px;border-radius:6px;border:2px solid #858789;background:#fff"></div>
<svg style="position:absolute;left:256px;top:980px" width="32" height="32" viewBox="0 0 32 32"><g fill="none" stroke="#7b7f85" stroke-width="2.2" stroke-linejoin="miter"><path d="M2 29.5 V22.5 L20 4.5 L27.5 12 L9.5 30 H2 Z"/><path d="M22.5 2 L30 9.5 M20 4.5 L27.5 12"/></g></svg>
<svg style="position:absolute;left:321px;top:984px" width="34" height="26" viewBox="0 0 34 26"><g fill="none" stroke="#7b7f85" stroke-width="2.3"><rect x="1.2" y="1.2" width="31" height="22.5" rx="3"/><path d="M2.5 3 L17 16 L31.5 3"/></g></svg>
<svg style="position:absolute;left:387px;top:982px" width="30" height="30" viewBox="0 0 30 30"><rect x="1.3" y="1.3" width="26" height="26" fill="none" stroke="#7b7f85" stroke-width="2.4"/><path d="M6.5 7.5 H21.5 M6.5 13.5 H21.5 M6.5 19.5 H14" stroke="#7b7f85" stroke-width="2.3"/></svg>
<div style="position:absolute;left:474px;top:984px;font-size:27px;font-weight:normal;color:#2f3134;letter-spacing:0.1px;white-space:nowrap;line-height:1;">92</div>
<svg style="position:absolute;left:581px;top:978px" width="36" height="38" viewBox="0 0 36 38"><polygon points="18.00,3.00 31.86,11.00 31.86,27.00 18.00,35.00 4.14,27.00 4.14,11.00" fill="#f0962a" stroke="#f0962a" stroke-width="4" stroke-linejoin="round"/><g transform="translate(18 19) rotate(-57) scale(1.42)"><path d="M-7 -4.6 H7 V-1.7 a1.7 1.7 0 0 0 0 3.4 V4.6 H-7 V1.7 a1.7 1.7 0 0 0 0 -3.4 Z" fill="#fff"/></g></svg>
<div style="position:absolute;left:630px;top:983px;font-size:27px;font-weight:normal;color:#2f3134;letter-spacing:0.1px;white-space:nowrap;line-height:1;">Laptop Crashes</div>
<div style="position:absolute;left:1220px;top:983px;font-size:27px;font-weight:normal;color:#2f3134;letter-spacing:0.1px;white-space:nowrap;line-height:1;">Benjamin Allen</div>
<div style="position:absolute;left:1500px;top:988px;width:18px;height:18px;border-radius:50%;background:#d4d5d6"></div>
<div style="position:absolute;left:1527px;top:983px;font-size:27px;font-weight:normal;color:#2f3134;letter-spacing:0.1px;white-space:nowrap;line-height:1;">Heather Grah...</div>
<svg style="position:absolute;left:1805px;top:975px" width="42" height="44" viewBox="0 0 42 44"><path d="M19 26 V15 A11 11 0 1 0 24.5 35.5 Z" fill="#e4e5e6"/><g fill="none" stroke="#8f9296" stroke-width="2.8"><circle cx="19" cy="26" r="15.2"/><path d="M12.5 4 H26"/><path d="M19.3 16 V26 H28.5"/></g></svg>
<div style="position:absolute;left:2062px;top:983px;font-size:27px;font-weight:normal;color:#2f3134;letter-spacing:0.1px;white-space:nowrap;line-height:1;">-</div>
<svg style="position:absolute;left:2397px;top:983px" width="33" height="33" viewBox="0 0 33 33"><circle cx="16.5" cy="16.5" r="14.3" fill="none" stroke="#f5a033" stroke-width="2.5"/><circle cx="16.5" cy="16.5" r="6.9" fill="#f0962a"/></svg>
<svg style="position:absolute;left:2438px;top:985px" width="28" height="30" viewBox="0 0 28 30"><path d="M2 1 V29" stroke="#7d7a72" stroke-width="2.4"/><path d="M4.5 1 H27 L20.5 10 L27 19 H4.5 Z" fill="#ea0a16"/></svg>
<div style="position:absolute;left:2478px;top:983px;font-size:27px;font-weight:normal;color:#2f3134;letter-spacing:0.1px;white-space:nowrap;line-height:1;">Ope</div>
<div style="position:absolute;left:174px;top:1050px;width:2353px;height:136px;background:#fff"></div>
<div style="position:absolute;left:174px;top:1186px;width:2353px;height:2px;background:#e4e5e7"></div>
<div style="position:absolute;left:194px;top:1081px;width:28px;height:28px;border-radius:6px;border:2px solid #858789;background:#fff"></div>
<svg style="position:absolute;left:256px;top:1080px" width="32" height="32" viewBox="0 0 32 32"><g fill="none" stroke="#7b7f85" stroke-width="2.2" stroke-linejoin="miter"><path d="M2 29.5 V22.5 L20 4.5 L27.5 12 L9.5 30 H2 Z"/><path d="M22.5 2 L30 9.5 M20 4.5 L27.5 12"/></g></svg>
<svg style="position:absolute;left:321px;top:1084px" width="34" height="26" viewBox="0 0 34 26"><g fill="none" stroke="#7b7f85" stroke-width="2.3"><rect x="1.2" y="1.2" width="31" height="22.5" rx="3"/><path d="M2.5 3 L17 16 L31.5 3"/></g></svg>
<svg style="position:absolute;left:387px;top:1082px" width="30" height="30" viewBox="0 0 30 30"><rect x="1.3" y="1.3" width="26" height="26" fill="none" stroke="#7b7f85" stroke-width="2.4"/><path d="M6.5 7.5 H21.5 M6.5 13.5 H21.5 M6.5 19.5 H14" stroke="#7b7f85" stroke-width="2.3"/></svg>
<div style="position:absolute;left:474px;top:1084px;font-size:27px;font-weight:normal;color:#2f3134;letter-spacing:0.1px;white-space:nowrap;line-height:1;">111</div>
<svg style="position:absolute;left:581px;top:1078px" width="36" height="38" viewBox="0 0 36 38"><polygon points="18.00,3.00 31.86,11.00 31.86,27.00 18.00,35.00 4.14,27.00 4.14,11.00" fill="#29b6c0" stroke="#29b6c0" stroke-width="4" stroke-linejoin="round"/><g fill="none" stroke="#fff" stroke-width="2"><path d="M8 11 H11 L13.5 22 H24 L26 14 H12"/></g><circle cx="15" cy="26" r="1.8" fill="#fff"/><circle cx="22.5" cy="26" r="1.8" fill="#fff"/></svg>
<div style="position:absolute;left:630px;top:1083px;font-size:27px;font-weight:normal;color:#2f3134;letter-spacing:0.1px;white-space:nowrap;line-height:1;">Please provide me an account in our CRM</div>
<div style="position:absolute;left:630px;top:1127px;font-size:27px;font-weight:normal;color:#2f3134;letter-spacing:0.1px;white-space:nowrap;line-height:1;">system</div>
<div style="position:absolute;left:1220px;top:1083px;font-size:27px;font-weight:normal;color:#2f3134;letter-spacing:0.1px;white-space:nowrap;line-height:1;">Bella Mark</div>
<div style="position:absolute;left:1500px;top:1088px;width:18px;height:18px;border-radius:50%;background:#d4d5d6"></div>
<div style="position:absolute;left:1527px;top:1083px;font-size:27px;font-weight:normal;color:#2f3134;letter-spacing:0.1px;white-space:nowrap;line-height:1;">John Roberts</div>
<svg style="position:absolute;left:1805px;top:1075px" width="42" height="44" viewBox="0 0 42 44"><path d="M19 26 V15 A11 11 0 1 0 24.5 35.5 Z" fill="#e4e5e6"/><g fill="none" stroke="#8f9296" stroke-width="2.8"><circle cx="19" cy="26" r="15.2"/><path d="M12.5 4 H26"/><path d="M19.3 16 V26 H28.5"/></g></svg>
<div style="position:absolute;left:2062px;top:1083px;font-size:27px;font-weight:normal;color:#2f3134;letter-spacing:0.1px;white-space:nowrap;line-height:1;">-</div>
<svg style="position:absolute;left:2397px;top:1083px" width="33" height="33" viewBox="0 0 33 33"><circle cx="16.5" cy="16.5" r="14.3" fill="none" stroke="#f5a033" stroke-width="2.5"/><circle cx="16.5" cy="16.5" r="6.9" fill="#f0962a"/></svg>
<svg style="position:absolute;left:2438px;top:1085px" width="28" height="30" viewBox="0 0 28 30"><path d="M2 1 V29" stroke="#7d7a72" stroke-width="2.4"/><path d="M4.5 1 H27 L20.5 10 L27 19 H4.5 Z" fill="#f5ab4a"/></svg>
<div style="position:absolute;left:2473px;top:1083px;font-size:27px;font-weight:normal;color:#2f3134;letter-spacing:0.1px;white-space:nowrap;line-height:1;">Oper</div>
<div style="position:absolute;left:174px;top:1188px;width:2353px;height:98px;background:#fff"></div>
<div style="position:absolute;left:174px;top:1286px;width:2353px;height:2px;background:#e4e5e7"></div>
<div style="position:absolute;left:194px;top:1219px;width:28px;height:28px;border-radius:6px;border:2px solid #858789;background:#fff"></div>
<svg style="position:absolute;left:256px;top:1218px" width="32" height="32" viewBox="0 0 32 32"><g fill="none" stroke="#7b7f85" stroke-width="2.2" stroke-linejoin="miter"><path d="M2 29.5 V22.5 L20 4.5 L27.5 12 L9.5 30 H2 Z"/><path d="M22.5 2 L30 9.5 M20 4.5 L27.5 12"/></g></svg>
<svg style="position:absolute;left:321px;top:1222px" width="34" height="26" viewBox="0 0 34 26"><g fill="none" stroke="#7b7f85" stroke-width="2.3"><rect x="1.2" y="1.2" width="31" height="22.5" rx="3"/><path d="M2.5 3 L17 16 L31.5 3"/></g></svg>
<svg style="position:absolute;left:387px;top:1220px" width="30" height="30" viewBox="0 0 30 30"><rect x="1.3" y="1.3" width="26" height="26" fill="none" stroke="#7b7f85" stroke-width="2.4"/><path d="M6.5 7.5 H21.5 M6.5 13.5 H21.5 M6.5 19.5 H14" stroke="#7b7f85" stroke-width="2.3"/></svg>
<div style="position:absolute;left:474px;top:1222px;font-size:27px;font-weight:normal;color:#2f3134;letter-spacing:0.1px;white-space:nowrap;line-height:1;">69</div>
<svg style="position:absolute;left:550px;top:1221px" width="26" height="30" viewBox="0 0 26 30"><path d="M20 6 L8 20 a3.5 3.5 0 0 0 5 5 L23 13 a6 6 0 0 0 -9 -8 L4 17 a7.5 7.5 0 0 0 11 10" fill="none" stroke="#9a9da1" stroke-width="2.3" stroke-linecap="round"/></svg>
<svg style="position:absolute;left:581px;top:1216px" width="36" height="38" viewBox="0 0 36 38"><polygon points="18.00,3.00 31.86,11.00 31.86,27.00 18.00,35.00 4.14,27.00 4.14,11.00" fill="#f0962a" stroke="#f0962a" stroke-width="4" stroke-linejoin="round"/><g transform="translate(18 19) rotate(-57) scale(1.42)"><path d="M-7 -4.6 H7 V-1.7 a1.7 1.7 0 0 0 0 3.4 V4.6 H-7 V1.7 a1.7 1.7 0 0 0 0 -3.4 Z" fill="#fff"/></g></svg>
<div style="position:absolute;left:630px;top:1221px;font-size:27px;font-weight:normal;color:#2f3134;letter-spacing:0.1px;white-space:nowrap;line-height:1;">Printer Issues</div>
<div style="position:absolute;left:1220px;top:1221px;font-size:27px;font-weight:normal;color:#2f3134;letter-spacing:0.1px;white-space:nowrap;line-height:1;">Bella Mark</div>
<div style="position:absolute;left:1500px;top:1226px;width:18px;height:18px;border-radius:50%;background:#d4d5d6"></div>
<div style="position:absolute;left:1527px;top:1221px;font-size:27px;font-weight:normal;color:#2f3134;letter-spacing:0.1px;white-space:nowrap;line-height:1;">Howard Stern</div>
<svg style="position:absolute;left:1805px;top:1213px" width="42" height="44" viewBox="0 0 42 44"><path d="M21.3 15.5 V25 L29.6 30.5 A15.5 15.5 0 0 0 21.3 10.5 Z" fill="#cfe0fa"/><g fill="none" stroke="#3d82ef" stroke-width="3" stroke-linecap="round"><circle cx="21" cy="26" r="15.5"/><path d="M14.5 6 Q21 3.5 27.5 6"/><path d="M21.3 15.5 V25 L29.6 30.5"/></g></svg>
<div style="position:absolute;left:2062px;top:1221px;font-size:27px;font-weight:normal;color:#2f3134;letter-spacing:0.1px;white-space:nowrap;line-height:1;">-</div>
<svg style="position:absolute;left:2402px;top:1223px" width="28" height="30" viewBox="0 0 28 30"><path d="M2 1 V29" stroke="#7d7a72" stroke-width="2.4"/><path d="M4.5 1 H27 L20.5 10 L27 19 H4.5 Z" fill="#ea0a16"/></svg>
<div style="position:absolute;left:2445px;top:1221px;font-size:27px;font-weight:normal;color:#2f3134;letter-spacing:0.1px;white-space:nowrap;line-height:1;">Open</div>
<div style="position:absolute;left:174px;top:1288px;width:2353px;height:98px;background:#fff"></div>
<div style="position:absolute;left:174px;top:1386px;width:2353px;height:2px;background:#e4e5e7"></div>
<div style="position:absolute;left:194px;top:1319px;width:28px;height:28px;border-radius:6px;border:2px solid #858789;background:#fff"></div>
<svg style="position:absolute;left:256px;top:1318px" width="32" height="32" viewBox="0 0 32 32"><g fill="none" stroke="#7b7f85" stroke-width="2.2" stroke-linejoin="miter"><path d="M2 29.5 V22.5 L20 4.5 L27.5 12 L9.5 30 H2 Z"/><path d="M22.5 2 L30 9.5 M20 4.5 L27.5 12"/></g></svg>
<svg style="position:absolute;left:321px;top:1322px" width="34" height="26" viewBox="0 0 34 26"><g fill="none" stroke="#7b7f85" stroke-width="2.3"><rect x="1.2" y="1.2" width="31" height="22.5" rx="3"/><path d="M2.5 3 L17 16 L31.5 3"/></g></svg>
<svg style="position:absolute;left:387px;top:1320px" width="30" height="30" viewBox="0 0 30 30"><rect x="1.3" y="1.3" width="26" height="26" fill="#fde6bd" stroke="#f5a623" stroke-width="2.4"/><path d="M6.5 7.5 H21.5 M6.5 13.5 H21.5 M6.5 19.5 H14" stroke="#f5a623" stroke-width="2.3"/></svg>
<div style="position:absolute;left:474px;top:1322px;font-size:26.5px;font-weight:bold;color:#2f3134;letter-spacing:-0.2px;white-space:nowrap;line-height:1;">73</div>
<svg style="position:absolute;left:550px;top:1321px" width="26" height="30" viewBox="0 0 26 30"><path d="M20 6 L8 20 a3.5 3.5 0 0 0 5 5 L23 13 a6 6 0 0 0 -9 -8 L4 17 a7.5 7.5 0 0 0 11 10" fill="none" stroke="#9a9da1" stroke-width="2.3" stroke-linecap="round"/></svg>
<svg style="position:absolute;left:581px;top:1316px" width="36" height="38" viewBox="0 0 36 38"><polygon points="18.00,3.00 31.86,11.00 31.86,27.00 18.00,35.00 4.14,27.00 4.14,11.00" fill="#f0962a" stroke="#f0962a" stroke-width="4" stroke-linejoin="round"/><g transform="translate(18 19) rotate(-57) scale(1.42)"><path d="M-7 -4.6 H7 V-1.7 a1.7 1.7 0 0 0 0 3.4 V4.6 H-7 V1.7 a1.7 1.7 0 0 0 0 -3.4 Z" fill="#fff"/></g></svg>
<div style="position:absolute;left:630px;top:1321px;font-size:26.5px;font-weight:bold;color:#2f3134;letter-spacing:-0.2px;white-space:nowrap;line-height:1;">Problem with email attachments</div>
<div style="position:absolute;left:1220px;top:1321px;font-size:26.5px;font-weight:bold;color:#2f3134;letter-spacing:-0.2px;white-space:nowrap;line-height:1;">Henry James</div>
<div style="position:absolute;left:1500px;top:1321px;font-size:26.5px;font-weight:bold;color:#2f3134;letter-spacing:-0.2px;white-space:nowrap;line-height:1;">Unassigned</div>
<svg style="position:absolute;left:1805px;top:1313px" width="42" height="44" viewBox="0 0 42 44"><path d="M19 26 V15 A11 11 0 1 0 24.5 35.5 Z" fill="#e4e5e6"/><g fill="none" stroke="#8f9296" stroke-width="2.8"><circle cx="19" cy="26" r="15.2"/><path d="M12.5 4 H26"/><path d="M19.3 16 V26 H28.5"/></g></svg>
<div style="position:absolute;left:2062px;top:1321px;font-size:26.5px;font-weight:bold;color:#2f3134;letter-spacing:-0.2px;white-space:nowrap;line-height:1;">Hardware Problems</div>
<svg style="position:absolute;left:2402px;top:1323px" width="28" height="30" viewBox="0 0 28 30"><path d="M2 1 V29" stroke="#7d7a72" stroke-width="2.4"/><path d="M4.5 1 H27 L20.5 10 L27 19 H4.5 Z" fill="#ea0a16"/></svg>
<div style="position:absolute;left:2445px;top:1321px;font-size:26.5px;font-weight:bold;color:#2f3134;letter-spacing:-0.2px;white-space:nowrap;line-height:1;">Closed</div>
<div style="position:absolute;left:2527px;top:300px;width:31px;height:1060px;background:#fff;z-index:5"></div>
</body></html>
